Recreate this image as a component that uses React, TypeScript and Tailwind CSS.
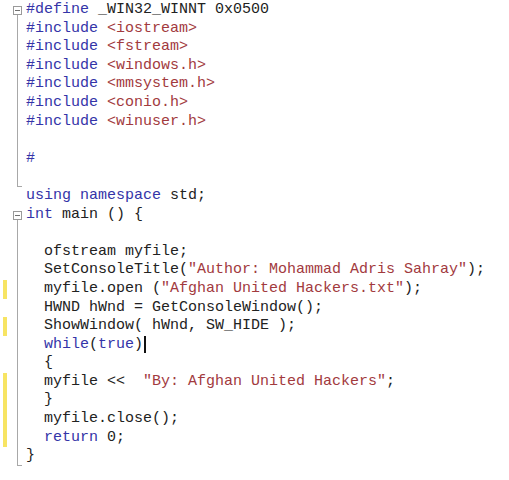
import React from "react";

type Seg = { t: string; c?: "k" | "s" | "n" };
type Fold = "start" | "mid" | "end" | "none";
type Line = { segs: Seg[]; fold: Fold; changed?: boolean; cursor?: boolean };

const K = (t: string): Seg => ({ t, c: "k" });
const S = (t: string): Seg => ({ t, c: "s" });
const N = (t: string): Seg => ({ t, c: "n" });

const lines: Line[] = [
  { segs: [K("#define"), N(" _WIN32_WINNT 0x0500")], fold: "start" },
  { segs: [K("#include"), N(" "), S("<iostream>")], fold: "mid" },
  { segs: [K("#include"), N(" "), S("<fstream>")], fold: "mid" },
  { segs: [K("#include"), N(" "), S("<windows.h>")], fold: "mid" },
  { segs: [K("#include"), N(" "), S("<mmsystem.h>")], fold: "mid" },
  { segs: [K("#include"), N(" "), S("<conio.h>")], fold: "mid" },
  { segs: [K("#include"), N(" "), S("<winuser.h>")], fold: "mid" },
  { segs: [], fold: "mid" },
  { segs: [K("#")], fold: "mid" },
  { segs: [], fold: "end" },
  { segs: [K("using namespace"), N(" std;")], fold: "none" },
  { segs: [K("int"), N(" main () {")], fold: "start" },
  { segs: [], fold: "mid" },
  { segs: [N("  ofstream myfile;")], fold: "mid" },
  { segs: [N("  SetConsoleTitle("), S("\"Author: Mohammad Adris Sahray\""), N(");")], fold: "mid" },
  { segs: [N("  myfile.open ("), S("\"Afghan United Hackers.txt\""), N(");")], fold: "mid", changed: true },
  { segs: [N("  HWND hWnd = GetConsoleWindow();")], fold: "mid" },
  { segs: [N("  ShowWindow( hWnd, SW_HIDE );")], fold: "mid", changed: true },
  { segs: [N("  "), K("while"), N("("), K("true"), N(")")], fold: "mid", cursor: true },
  { segs: [N("  {")], fold: "mid" },
  { segs: [N("  myfile <<  "), S("\"By: Afghan United Hackers\""), N(";")], fold: "mid", changed: true },
  { segs: [N("  }")], fold: "mid", changed: true },
  { segs: [N("  myfile.close();")], fold: "mid", changed: true },
  { segs: [N("  "), K("return"), N(" 0;")], fold: "mid", changed: true },
  { segs: [N("}")], fold: "end" },
];

function FoldMark({ fold }: { fold: Fold }) {
  if (fold === "none") return <div className="w-[9px]" />;
  if (fold === "start")
    return (
      <div className="w-[9px] flex flex-col items-center pt-[5px]">
        <div className="w-[9px] h-[9px] shrink-0 border border-[#9a9a9a] bg-white flex items-center justify-center">
          <div className="w-[5px] h-px bg-[#707070]" />
        </div>
        <div className="flex-1 w-px bg-[#a8a8a8]" />
      </div>
    );
  if (fold === "end")
    return (
      <div className="w-[9px] flex flex-col">
        <div className="flex-1 w-px ml-[4px] bg-[#a8a8a8]" />
        <div className="h-px w-[5px] ml-[4px] bg-[#a8a8a8]" />
      </div>
    );
  return (
    <div className="w-[9px] flex flex-col items-center">
      <div className="flex-1 w-px bg-[#a8a8a8]" />
    </div>
  );
}

export default function App() {
  return (
    <div
      className="w-[509px] h-[480px] bg-white overflow-hidden"
      style={{ fontFamily: '"Liberation Mono", "Courier New", monospace' }}
    >
      <div className="flex flex-col pt-px">
        {lines.map((ln, i) => (
          <div key={i} className="flex h-[18.6px] items-stretch">
            <div className="flex items-stretch pl-[3px] pr-[4px] shrink-0">
              <div className={ln.changed ? "w-[4px] bg-[#f7e463]" : "w-[4px]"} />
              <div className="w-[6px]" />
              <FoldMark fold={ln.fold} />
            </div>
            <div className="text-[15px] leading-[18.6px] whitespace-pre text-[#222] flex items-center">
              <span>
                {ln.segs.map((s, j) => (
                  <span
                    key={j}
                    className={
                      s.c === "k" ? "text-[#3434a8]" : s.c === "s" ? "text-[#a23a3e]" : "text-[#222]"
                    }
                  >
                    {s.t}
                  </span>
                ))}
              </span>
              {ln.cursor && <span className="inline-block w-[2px] h-[17px] bg-[#111] ml-px" />}
            </div>
          </div>
        ))}
      </div>
    </div>
  );
}
